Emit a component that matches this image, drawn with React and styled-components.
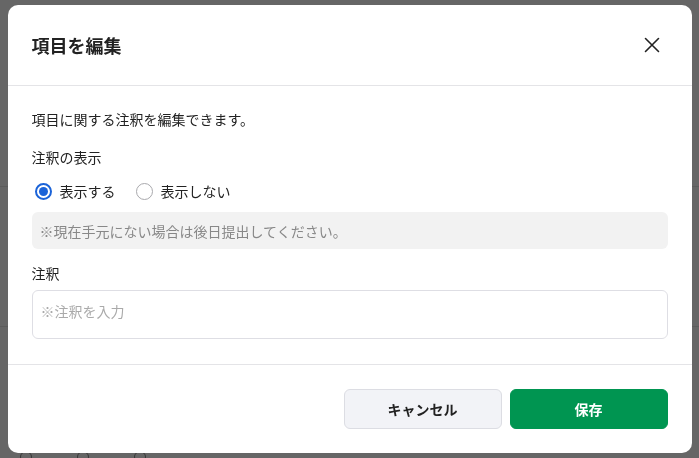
import React, { useState } from "react";
import styled, { createGlobalStyle } from "styled-components";

const GlobalStyle = createGlobalStyle`
  html, body {
    margin: 0;
    padding: 0;
    height: 100%;
    background: #fff;
    font-family: "Noto Sans CJK JP", "Noto Sans", sans-serif;
    color: #222;
  }
  * { box-sizing: border-box; }
`;

// page behind the overlay (mostly hidden)
const Page = styled.div`
  height: 458px;
  display: flex;
  flex-direction: column;
  overflow: hidden;
`;
const PageRow = styled.div`
  flex-shrink: 0;
  height: ${(p) => p.h}px;
  border-bottom: 1px solid ${(p) => (p.line ? "#e6e6e6" : "transparent")};
  background: ${(p) => p.bg || "#fff"};
`;
const PageRadios = styled.div`
  display: flex;
  gap: 45px;
  padding: 0 20px;
  span {
    width: 12px;
    height: 12px;
    border: 1.5px solid #888;
    border-radius: 50%;
  }
`;

const Overlay = styled.div`
  position: fixed;
  inset: 0;
  background: rgba(0, 0, 0, 0.6);
  display: flex;
  align-items: flex-start;
  justify-content: center;
  padding-top: 5px;
`;

const Modal = styled.div`
  width: 684px;
  height: 448px;
  background: #fff;
  border-radius: 10px;
  display: flex;
  flex-direction: column;
  overflow: hidden;
`;

const Header = styled.div`
  height: 81px;
  display: flex;
  align-items: center;
  justify-content: space-between;
  padding: 0 30px 0 24px;
  border-bottom: 1px solid #e4e4e7;
  h2 {
    margin: 0;
    font-size: 18px;
    font-weight: 700;
    color: #222;
  }
`;

const CloseBtn = styled.button`
  border: none;
  background: none;
  padding: 0;
  width: 20px;
  height: 20px;
  display: flex;
  align-items: center;
  justify-content: center;
  cursor: pointer;
  color: #222;
`;

const Body = styled.div`
  padding: 23px 24px 25px;
  border-bottom: 1px solid #e4e4e7;
  font-size: 14px;
  line-height: 20px;
`;

const Text = styled.p`
  margin: ${(p) => p.mt || 0}px 0 0;
  color: #222;
`;

const RadioRow = styled.div`
  display: flex;
  gap: 20px;
  margin-top: 14px;
  padding-left: 3px;
`;

const RadioLabel = styled.label`
  display: flex;
  align-items: center;
  gap: 8px;
  cursor: pointer;
  color: #222;
`;

const Dot = styled.span`
  width: 17px;
  height: 17px;
  border-radius: 50%;
  border: ${(p) => (p.on ? "2px solid #1b63d8" : "1.5px solid #a9a9ad")};
  display: flex;
  align-items: center;
  justify-content: center;
  &::after {
    content: "";
    width: 9px;
    height: 9px;
    border-radius: 50%;
    background: ${(p) => (p.on ? "#1b63d8" : "transparent")};
  }
`;

const Note = styled.div`
  margin-top: 11px;
  height: 37px;
  background: #f2f2f2;
  border-radius: 6px;
  padding: 0 8px;
  display: flex;
  align-items: center;
  color: #888;
`;

const TextArea = styled.textarea`
  display: block;
  margin-top: 7px;
  width: 100%;
  height: 49px;
  border: 1px solid #dedee4;
  border-radius: 6px;
  padding: 10px 8px;
  resize: none;
  font: inherit;
  line-height: 20px;
  color: #222;
  outline: none;
  &::placeholder {
    color: #aaa;
  }
`;

const Footer = styled.div`
  flex: 1;
  display: flex;
  justify-content: flex-end;
  align-items: flex-start;
  gap: 8px;
  padding: 24px 24px;
`;

const Button = styled.button`
  width: 158px;
  height: 40px;
  border-radius: 6px;
  font: inherit;
  font-size: 14px;
  font-weight: 700;
  cursor: pointer;
  border: 1px solid ${(p) => (p.primary ? "#009551" : "#dcdde3")};
  background: ${(p) => (p.primary ? "#009551" : "#f2f3f7")};
  color: ${(p) => (p.primary ? "#fff" : "#222")};
`;

export default function App() {
  const [show, setShow] = useState(true);
  return (
    <>
      <GlobalStyle />
      <Page>
        <PageRow h={121} />
        <PageRow h={66} line />
        <PageRow h={140} line />
        <PageRow h={124} />
        <PageRadios>
          <span />
          <span />
          <span />
        </PageRadios>
      </Page>
      <Overlay>
        <Modal>
          <Header>
            <h2>項目を編集</h2>
            <CloseBtn aria-label="閉じる">
              <svg width="16" height="16" viewBox="0 0 16 16" fill="none" stroke="currentColor" strokeWidth="1.6" strokeLinecap="round">
                <path d="M1.5 1.5 L14.5 14.5 M14.5 1.5 L1.5 14.5" />
              </svg>
            </CloseBtn>
          </Header>
          <Body>
            <Text>項目に関する注釈を編集できます。</Text>
            <Text mt={18}>注釈の表示</Text>
            <RadioRow>
              <RadioLabel onClick={() => setShow(true)}>
                <Dot on={show ? 1 : 0} />
                表示する
              </RadioLabel>
              <RadioLabel onClick={() => setShow(false)}>
                <Dot on={!show ? 1 : 0} />
                表示しない
              </RadioLabel>
            </RadioRow>
            <Note>※現在手元にない場合は後日提出してください。</Note>
            <Text mt={14}>注釈</Text>
            <TextArea placeholder="※注釈を入力" />
          </Body>
          <Footer>
            <Button>キャンセル</Button>
            <Button primary>保存</Button>
          </Footer>
        </Modal>
      </Overlay>
    </>
  );
}
